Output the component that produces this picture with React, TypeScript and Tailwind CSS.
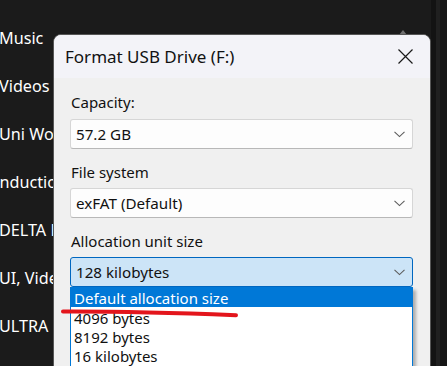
import React from "react";

const FONT = '"Segoe UI", "Noto Sans", "Open Sans", sans-serif';

function Chevron() {
  return (
    <svg width="11" height="7" viewBox="0 0 11 7" className="shrink-0">
      <path d="M0.5 0.8 L5.5 5.6 L10.5 0.8" fill="none" stroke="#5c5c5c" strokeWidth="1.1" />
    </svg>
  );
}

function Select({ value, active = false }: { value: string; active?: boolean }) {
  return (
    <div
      className={
        active
          ? "h-[30px] rounded-[3px] border border-[#0067c0] bg-[#cce4f7] flex items-center justify-between pl-[5px] pr-[7px]"
          : "h-[30px] rounded-[3px] border border-[#d6d6d6] border-b-[#b8b8b8] bg-[#fdfdfd] flex items-center justify-between pl-[5px] pr-[7px]"
      }
    >
      <span className="text-[15.2px] leading-[20px] text-[#111]">{value}</span>
      <Chevron />
    </div>
  );
}

export default function App() {
  const side = ["Pictures", "Music", "Videos", "Uni Work", "Induction", "DELTA Docs", "UI, Videos", "ULTRA"];
  return (
    <div
      className="relative w-[447px] h-[366px] overflow-hidden bg-[#1b1b1b] flex"
      style={{ fontFamily: FONT }}
    >
      {/* sidebar */}
      <div className="w-[431px] flex flex-col -mt-[34px]">
        {side.map((s) => (
          <div
            key={s}
            className={
              s === "Induction"
                ? "h-[48px] flex items-center -ml-[6px] text-[16.2px] text-white"
                : "h-[48px] flex items-center -ml-[1px] text-[16.2px] text-white"
            }
          >
            {s}
          </div>
        ))}
      </div>
      {/* scrollbar strip */}
      <div className="flex h-full">
        <div className="w-[5px] bg-[#131313]" />
        <div className="w-[4px] bg-[#202020]" />
        <div className="w-[7px] bg-[#161616]" />
      </div>

      {/* small pointer */}
      <div className="absolute left-[399px] top-[30px] w-0 h-0 border-l-[4px] border-r-[4px] border-b-[5px] border-l-transparent border-r-transparent border-b-[#6f6f6f]" />

      {/* dialog */}
      <div className="absolute left-[53px] top-[34px] w-[378px] h-[345px] rounded-t-[8px] border border-[#555555] bg-[#f0f0f0] flex flex-col">
        <div className="h-[43px] rounded-t-[7px] bg-[#f3f3f8] flex items-center justify-between pl-[11px] pr-[17px]">
          <span className="text-[17px] text-[#111]">Format USB Drive (F:)</span>
          <svg width="15" height="15" viewBox="0 0 15 15">
            <path d="M0.5 0.5 L14.5 14.5 M14.5 0.5 L0.5 14.5" stroke="#1a1a1a" strokeWidth="1.2" />
          </svg>
        </div>
        <div className="flex flex-col pl-[16px] pr-[17px] pt-[14px]">
          <div className="h-[20px] leading-[20px] pl-[1px] text-[15px] text-[#111]">Capacity:</div>
          <div className="mt-[7px]">
            <Select value="57.2 GB" />
          </div>
          <div className="mt-[13px] h-[20px] leading-[20px] pl-[1px] text-[15px] text-[#111]">File system</div>
          <div className="mt-[6px]">
            <Select value="exFAT (Default)" />
          </div>
          <div className="mt-[13px] h-[20px] leading-[20px] pl-[1px] text-[15px] text-[#111]">Allocation unit size</div>
          <div className="mt-[6px] relative">
            <Select value="128 kilobytes" active />
            <div className="absolute left-0 right-0 top-full h-[90px] bg-white border-x border-b border-[#0078d7] shadow-[3px_3px_3px_rgba(0,0,0,0.28)] flex flex-col">
              <div className="h-[20px] bg-[#0078d7] text-white pl-[3px] text-[15px] leading-[22px]">Default allocation size</div>
              <div className="mt-[1px] flex flex-col">
                <div className="h-[19px] pl-[3px] text-[15px] leading-[21px] text-[#111]">4096 bytes</div>
                <div className="h-[19px] pl-[3px] text-[15px] leading-[21px] text-[#111]">8192 bytes</div>
                <div className="h-[19px] pl-[3px] text-[15px] leading-[21px] text-[#111]">16 kilobytes</div>
              </div>
            </div>
          </div>
        </div>
      </div>

      {/* red underline annotation */}
      <svg className="absolute left-0 top-0 pointer-events-none" width="447" height="366">
        <path
          d="M63 311.5 C 110 311.3, 170 312.6, 236 315.2"
          fill="none"
          stroke="#e3151c"
          strokeWidth="4"
          strokeLinecap="round"
        />
      </svg>
    </div>
  );
}
